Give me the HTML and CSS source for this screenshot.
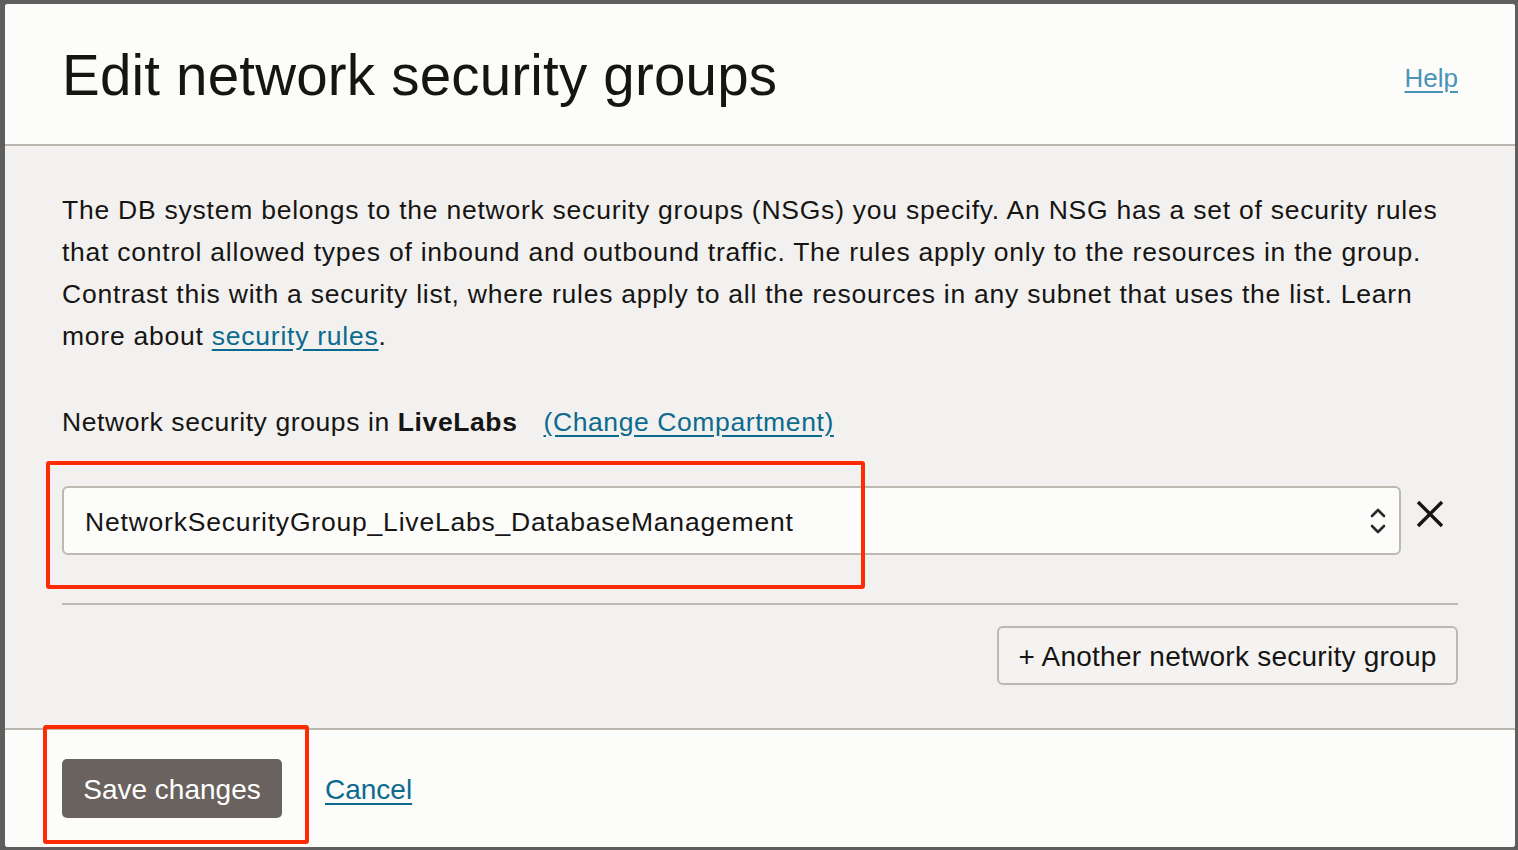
FILE: index.html
```html
<!DOCTYPE html>
<html lang="en">
<head>
<meta charset="utf-8">
<title>Edit network security groups</title>
<link rel="stylesheet" href="styles.css">
</head>
<body>
<div class="dialog">
  <header class="dlg-header">
    <h1 class="dlg-title">Edit network security groups</h1>
    <a class="help-link" href="#">Help</a>
  </header>
  <main class="dlg-body">
    <p class="intro">The DB system belongs to the network security groups (NSGs) you specify. An NSG has a set of security rules<br>that control allowed types of inbound and outbound traffic. The rules apply only to the resources in the group.<br>Contrast this with a security list, where rules apply to all the resources in any subnet that uses the list. Learn<br>more about <a class="link" href="#">security rules</a>.</p>
    <div class="compartment-row">
      <span>Network security groups in <strong>LiveLabs</strong></span>
      <a class="link" href="#">(Change Compartment)</a>
    </div>
    <div class="nsg-row">
      <div class="select">
        <span class="select-value">NetworkSecurityGroup_LiveLabs_DatabaseManagement</span>
        <svg class="chevrons" width="18" height="32" viewBox="0 0 18 32" aria-hidden="true">
          <path d="M3 11 L9 5 L15 11" fill="none" stroke="#2b2b2b" stroke-width="2.6" stroke-linecap="round" stroke-linejoin="round"/>
          <path d="M3 21 L9 27 L15 21" fill="none" stroke="#2b2b2b" stroke-width="2.6" stroke-linecap="round" stroke-linejoin="round"/>
        </svg>
      </div>
      <button class="remove" type="button" aria-label="Remove">
        <svg width="28" height="28" viewBox="0 0 28 28" aria-hidden="true">
          <path d="M2 2 L26 26 M26 2 L2 26" fill="none" stroke="#161513" stroke-width="3.4"/>
        </svg>
      </button>
      <div class="highlight highlight-select"></div>
    </div>
    <hr class="divider">
    <div class="add-row">
      <button class="add-btn" type="button">+ Another network security group</button>
    </div>
  </main>
  <footer class="dlg-footer">
    <button class="save-btn" type="button">Save changes</button>
    <a class="link cancel" href="#">Cancel</a>
    <div class="highlight highlight-save"></div>
  </footer>
</div>
</body>
</html>
```

FILE: styles.css
```css
* { box-sizing: border-box; }
html, body { margin: 0; padding: 0; }
body {
  width: 1518px;
  height: 850px;
  overflow: hidden;
  background: #5e5e5e;
  font-family: "Liberation Sans", Arial, Helvetica, sans-serif;
  color: #161513;
  padding: 4px 3px 3px 5px;
}
.dialog {
  width: 1510px;
  height: 843px;
  background: #f2f1ef;
  border-radius: 3px;
  display: flex;
  flex-direction: column;
  overflow: hidden;
}
.dlg-header {
  height: 142px;
  background: #fcfcfb;
  border-bottom: 2px solid #bcb6b0;
  display: flex;
  align-items: center;
  justify-content: space-between;
  padding: 0 57px 0 57px;
}
.dlg-title {
  margin: 0;
  font-size: 56.5px;
  font-weight: 400;
  letter-spacing: 0.2px;
  color: #161513;
  position: relative;
  top: 1px;
}
.help-link {
  font-size: 26px;
  color: #4a93b8;
  text-decoration: underline;
  text-underline-offset: 4px;
  position: relative;
  top: 4px;
}
.dlg-body {
  flex: 1;
  padding: 43px 57px 0 57px;
  font-size: 26.5px;
}
.intro {
  margin: 0;
  line-height: 42px;
  font-size: 26.5px;
  letter-spacing: 0.76px;
  white-space: nowrap;
}
.link {
  color: #0b6a8e;
  text-decoration: underline;
  text-underline-offset: 4px;
}
.compartment-row {
  margin-top: 44px;
  line-height: 42px;
  display: flex;
  gap: 26px;
  letter-spacing: 0.6px;
}
.compartment-row strong { font-weight: 700; }
.nsg-row {
  position: relative;
  margin-top: 43px;
  display: flex;
  align-items: flex-start;
  gap: 14px;
}
.select {
  width: 1339px;
  height: 69px;
  background: #fcfcfb;
  border: 2px solid #bdb8b2;
  border-radius: 6px;
  display: flex;
  align-items: center;
  justify-content: space-between;
  padding: 0 12px 0 21px;
}
.select-value { font-size: 26.5px; letter-spacing: 0.8px; position: relative; top: 2px; }
.chevrons { display: block; margin-top: 1px; }
.remove {
  background: none;
  border: 0;
  padding: 0;
  margin-top: 13px;
  width: 30px;
  height: 30px;
  display: flex;
  align-items: center;
  justify-content: center;
}
.highlight {
  position: absolute;
  border: 4px solid #ff2a06;
  border-radius: 3px;
  pointer-events: none;
}
.highlight-select {
  left: -16px;
  top: -25px;
  width: 819px;
  height: 128px;
}
.divider {
  margin: 48px 0 0 0;
  border: 0;
  border-top: 2px solid #bdb8b2;
  height: 0;
}
.add-row {
  display: flex;
  justify-content: flex-end;
  margin-top: 21px;
}
.add-btn {
  font-family: inherit;
  font-size: 28px;
  letter-spacing: 0.25px;
  color: #161513;
  background: #f4f3f1;
  border: 2px solid #bcb8b1;
  border-radius: 6px;
  height: 59px;
  width: 461px;
  padding: 3px 0 0 0;
}
.dlg-footer {
  position: relative;
  height: 119px;
  background: #fcfcfb;
  border-top: 2px solid #bcb6b0;
  display: flex;
  align-items: center;
  padding: 0 57px;
  gap: 43px;
}
.save-btn {
  font-family: inherit;
  font-size: 28px;
  color: #ffffff;
  background: #6a625e;
  border: 0;
  border-radius: 5px;
  width: 220px;
  height: 59px;
  padding: 3px 0 0 0;
  margin-top: -1px;
}
.cancel { font-size: 28px; position: relative; top: 1px; }
.highlight-save {
  left: 38px;
  top: -5px;
  width: 266px;
  height: 119px;
}
```
